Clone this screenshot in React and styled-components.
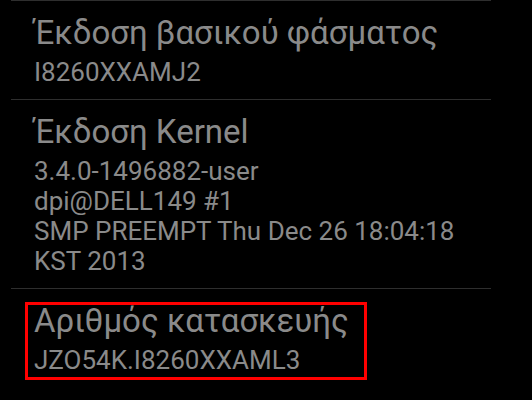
import React from "react";
import styled, {createGlobalStyle} from "styled-components";

const GlobalStyle = createGlobalStyle`
  html, body {
    margin: 0;
    padding: 0;
    background: #000000;
  }
  body {
    width: 532px;
    height: 400px;
    overflow: hidden;
    font-family: Roboto, "Noto Sans", "Liberation Sans", sans-serif;
  }
`;

const List = styled.div`
  width: 480px;
  margin-left: 11px;
  display: flex;
  flex-direction: column;
`;

const Item = styled.div`
  position: relative;
  border-top: 1px solid #2e2e2e;
  padding: 13px 0 12px 23px;
`;

const TextBlock = styled.div`
  position: relative;
  display: flex;
  flex-direction: column;
  gap: 5px;
`;

const Title = styled.div`
  font-size: 33px;
  line-height: 38px;
  color: #8a8a8a;
  white-space: nowrap;
`;

const Summary = styled.div`
  font-size: 26px;
  line-height: 30px;
  color: #8a8a8a;
  white-space: pre-line;
`;

// red annotation frame drawn over the highlighted entry
const Highlight = styled.div`
  position: absolute;
  left: -9px;
  top: 0;
  width: 342px;
  height: 78px;
  box-sizing: border-box;
  border: 3px solid #ff0000;
  pointer-events: none;
`;

const items = [
    {title: "Έκδοση βασικού φάσματος", summary: "I8260XXAMJ2"},
    {title: "Έκδοση Kernel", summary: "3.4.0-1496882-user\ndpi@DELL149 #1\nSMP PREEMPT Thu Dec 26 18:04:18\nKST 2013"},
    {title: "Αριθμός κατασκευής", summary: "JZO54K.I8260XXAML3", highlighted: true},
];

const App = () => {
    return (
        <>
            <GlobalStyle/>
            <List>
                {items.map((item) => (
                    <Item key={item.title}>
                        <TextBlock>
                            <Title>{item.title}</Title>
                            <Summary>{item.summary}</Summary>
                            {item.highlighted && <Highlight/>}
                        </TextBlock>
                    </Item>
                ))}
            </List>
        </>
    );
};

export default App;
